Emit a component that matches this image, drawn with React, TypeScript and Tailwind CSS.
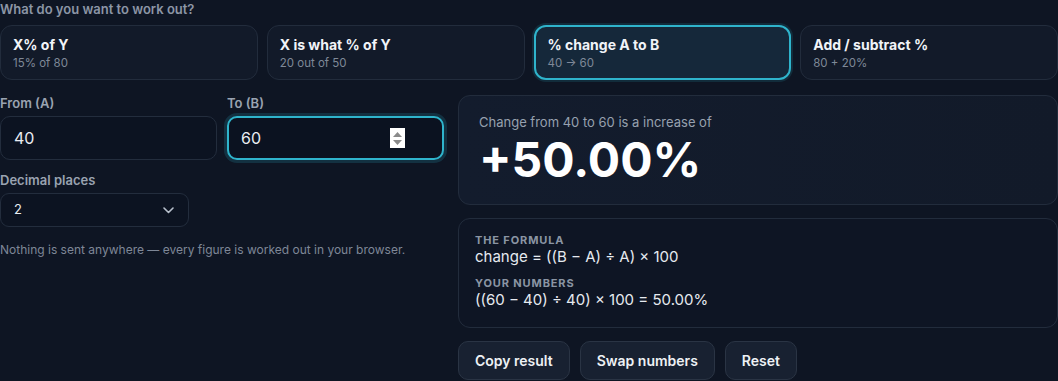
import React from "react";

const modes = [
  { t: "X% of Y", s: "15% of 80", active: false },
  { t: "X is what % of Y", s: "20 out of 50", active: false },
  { t: "% change A to B", s: "40 → 60", active: true },
  { t: "Add / subtract %", s: "80 + 20%", active: false },
];

export default function App() {
  return (
    <div
      className="w-[1058px] h-[381px] overflow-hidden bg-[#0e1523] text-[#e5e9f0]"
      style={{ fontFamily: "Inter, 'Noto Sans', sans-serif" }}
    >
      <div className="text-[13px] leading-[18px] font-semibold text-[#8c96a6]">What do you want to work out?</div>
      <div className="mt-[7px] grid grid-cols-4 gap-[9px]">
        {modes.map((m) => (
          <div
            key={m.t}
            className={
              m.active
                ? "h-[55px] rounded-xl border-2 border-[#2fb4cc] bg-[#15283a] px-[12px] pt-[8px] shadow-[0_0_0_2px_rgba(47,180,204,0.15)]"
                : "h-[55px] rounded-xl border border-[#222c3c] bg-[#121a29] px-[12px] pt-[9px]"
            }
          >
            <div className="text-[14px] leading-[20px] font-bold text-[#f1f4f8]">{m.t}</div>
            <div className="text-[11.5px] leading-[16px] text-[#7f8998]">{m.s}</div>
          </div>
        ))}
      </div>

      <div className="mt-[15px] flex gap-[14px]">
        <div className="w-[444px] shrink-0">
          <div className="flex gap-[10px]">
            <div className="w-[217px]">
              <div className="text-[13px] leading-[16px] font-semibold text-[#9aa3b1]">From (A)</div>
              <div className="mt-[5px] h-[44px] rounded-[10px] border border-[#232d3d] bg-[#0c1321] px-[13px] flex items-center text-[16px] text-[#e8ecf2]">
                40
              </div>
            </div>
            <div className="w-[217px]">
              <div className="text-[13px] leading-[16px] font-semibold text-[#9aa3b1]">To (B)</div>
              <div className="relative mt-[5px] h-[44px] rounded-[10px] border-2 border-[#2fb4cc] bg-[#0b1220] px-[12px] flex items-center text-[16px] text-[#e8ecf2] shadow-[0_0_0_3px_rgba(47,180,204,0.18)]">
                60
                <span className="absolute left-[161px] top-[10px] w-[15px] h-[20px] bg-white flex flex-col items-center justify-center gap-[3px]">
                  <svg width="9" height="5" viewBox="0 0 9 5"><path d="M0 5 L4.5 0 L9 5 Z" fill="#8a8a8a" /></svg>
                  <svg width="9" height="5" viewBox="0 0 9 5"><path d="M0 0 L4.5 5 L9 0 Z" fill="#8a8a8a" /></svg>
                </span>
              </div>
            </div>
          </div>
          <div className="mt-[12px] text-[13px] leading-[16px] font-semibold text-[#9aa3b1]">Decimal places</div>
          <div className="mt-[5px] w-[189px] h-[34px] rounded-[9px] border border-[#232d3d] bg-[#0c1321] pl-[13px] pr-[14px] flex items-center justify-between text-[13px] text-[#e8ecf2]">
            <span>2</span>
            <svg width="11" height="7" viewBox="0 0 11 7" fill="none">
              <path d="M1 1 L5.5 5.5 L10 1" stroke="#b8c0cc" strokeWidth="1.6" strokeLinecap="round" strokeLinejoin="round" />
            </svg>
          </div>
          <div className="mt-[15px] text-[12px] leading-[16px] text-[#7e8797]">
            Nothing is sent anywhere — every figure is worked out in your browser.
          </div>
        </div>

        <div className="flex-1 min-w-0">
          <div className="h-[110px] rounded-xl border border-[#222c3c] bg-gradient-to-r from-[#131c2d] to-[#121a29] pl-[20px] pt-[17px]">
            <div className="text-[13px] leading-[18px] text-[#97a1af]">Change from 40 to 60 is a increase of</div>
            <div className="mt-[5px] text-[48px] leading-[48px] font-bold text-white">+50.00%</div>
          </div>
          <div className="mt-[13px] h-[110px] rounded-xl border border-[#222c3c] bg-[#0e1524] pl-[16px] pt-[14px]">
            <div className="text-[11px] leading-[14px] font-bold tracking-[0.08em] text-[#8b95a4]">THE FORMULA</div>
            <div className="text-[15px] leading-[20px] text-[#e6eaf0]">change = ((B − A) ÷ A) × 100</div>
            <div className="mt-[9px] text-[11px] leading-[14px] font-bold tracking-[0.08em] text-[#8b95a4]">YOUR NUMBERS</div>
            <div className="text-[15px] leading-[20px] text-[#e6eaf0]">((60 − 40) ÷ 40) × 100 = 50.00%</div>
          </div>
          <div className="mt-[13px] flex gap-[10px]">
            {["Copy result", "Swap numbers", "Reset"].map((b) => (
              <div
                key={b}
                className="h-[39px] px-[16px] rounded-[10px] border border-[#2a3444] bg-[#182131] flex items-center text-[14px] font-semibold text-[#eef1f5]"
              >
                {b}
              </div>
            ))}
          </div>
        </div>
      </div>
    </div>
  );
}
